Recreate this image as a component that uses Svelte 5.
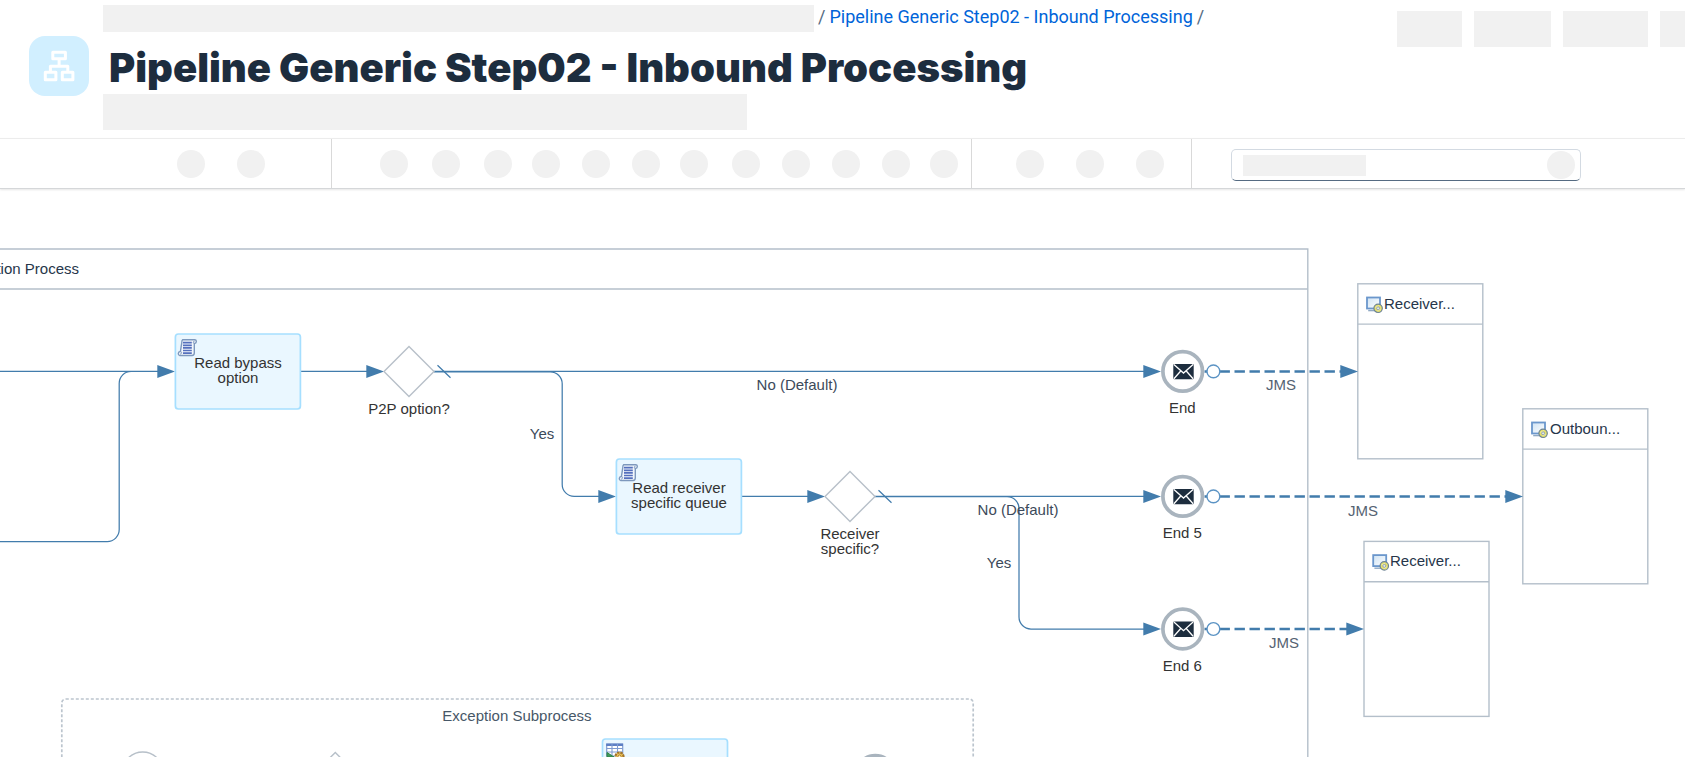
<script>
  const historyTools = ['Undo', 'Redo'];
  const paletteTools = [
    'Pointer', 'Hand', 'Participants', 'Process', 'Events', 'Mapping',
    'Transformation', 'Call', 'Routing', 'Security', 'Persistence', 'Validator'
  ];
  const viewTools = ['Zoom in', 'Zoom out', 'Fit'];

  const scripts = [
    { x: 175.4, y: 334, lines: ['Read bypass', 'option'] },
    { x: 616.4, y: 459, lines: ['Read receiver', 'specific queue'] }
  ];
  const gateways = [
    { x: 409, y: 371.4, lines: ['P2P option?'] },
    { x: 850, y: 496.4, lines: ['Receiver', 'specific?'] }
  ];
  const ends = [
    { y: 371.4, name: 'End', target: 1358 },
    { y: 496.4, name: 'End 5', target: 1523 },
    { y: 629, name: 'End 6', target: 1364 }
  ];
  const receivers = [
    { x: 1357.8, y: 283.8, name: 'Receiver...', tx: 1384 },
    { x: 1522.8, y: 408.8, name: 'Outboun...', tx: 1550 },
    { x: 1364, y: 541.4, name: 'Receiver...', tx: 1390 }
  ];
  const arrows = [
    [175, 371.4], [384, 371.4], [1161, 371.4],
    [616, 496.4], [825, 496.4], [1161, 496.4], [1161, 629]
  ];
  const labels = [
    { x: 797, y: 390, text: 'No (Default)' },
    { x: 1018, y: 515, text: 'No (Default)' },
    { x: 542, y: 439, text: 'Yes' },
    { x: 999, y: 568, text: 'Yes' }
  ];
  const protocols = [
    { x: 1281, y: 390 },
    { x: 1363, y: 516 },
    { x: 1284, y: 648 }
  ];
</script>

<div class="app">
  <header>
    <div class="tile">
      <svg width="32" height="32" viewBox="0 0 32 32" fill="none" stroke="#fff" stroke-width="3" stroke-linejoin="round" aria-hidden="true">
        <rect x="9.8" y="2.3" width="12.600" height="6.4" />
        <rect x="2.3" y="22.3" width="10.600" height="7.400" />
        <rect x="19.3" y="22.3" width="10.600" height="7.400" />
        <path d="M16.1 9v7M7.4 22v-5.800h17.400v5.800" />
      </svg>
    </div>
    <div class="heading">
      <nav class="crumbs" aria-label="Breadcrumb">
        <span class="block path"></span>
        <span>/</span>
        <a href="#step02">Pipeline Generic Step02 - Inbound Processing</a>
        <span>/</span>
      </nav>
      <h1>Pipeline Generic Step02 - Inbound Processing</h1>
      <div class="block status"></div>
    </div>
    <div class="actions">
      <button class="block a1" aria-label="Edit"></button>
      <button class="block a2" aria-label="Configure"></button>
      <button class="block a3" aria-label="Deploy"></button>
      <button class="block a4" aria-label="More"></button>
    </div>
  </header>

  <div class="toolbar" role="toolbar" aria-label="Editor tools">
    <div class="group history">
      {#each historyTools as t}<button class="dot" aria-label={t}></button>{/each}
    </div>
    <div class="group palette">
      {#each paletteTools as t}<button class="dot" aria-label={t}></button>{/each}
    </div>
    <div class="group view">
      {#each viewTools as t}<button class="dot" aria-label={t}></button>{/each}
    </div>
    <div class="search">
      <span class="block hint"></span>
      <input type="text" aria-label="Search" />
      <button class="dot" aria-label="Start search"></button>
    </div>
  </div>

  <main>
    <svg class="canvas" role="img" aria-label="Integration flow">
      <defs>
        <linearGradient id="screen" x1="0" y1="0" x2="1" y2="1">
          <stop offset="0" stop-color="#cfe3f4" />
          <stop offset="1" stop-color="#ffffff" />
        </linearGradient>
        <g id="scroll">
          <path d="M5.3 1h12.2c2 .2 2 3.8-.6 3.8v9.6c0 1.600-.8 2.400-2.200 2.400H2.300c-2-.2-2-4 .7-4L4.300 4.500c0-1.500.2-3 1-3.500z" fill="#f3f7fc" stroke="#7d98bd" stroke-width="1.400" />
          <path d="M16.900 4.800c-1.500-.3-1.200-2.500.2-2.300M3 12.800c1.800.2 1.500 2.600-.3 2.500" fill="none" stroke="#7d98bd" stroke-width="1" />
          <path d="M5.600 4h8.800M5.600 6.600h8.800M5.600 9.200h8.800M5.600 11.800h8.800M5.600 14.400h8.800" stroke="#5570bd" stroke-width="1.700" />
        </g>
        <g id="system">
          <path d="M2 14h8" stroke="#8fa9c4" stroke-width="1.400" />
          <rect x=".8" y=".9" width="13" height="11" fill="url(#screen)" stroke="#6b97cc" stroke-width="1.800" />
          <circle cx="11.900" cy="11.700" r="4.200" fill="#e6e06c" stroke="#6d8394" stroke-width="1.200" />
          <path d="M8.800 10.800l2.600.7 1.500-3M15 12.500l-2.600-.5-1.500 3" fill="#f5f6e6" opacity=".7" />
          <circle cx="11.900" cy="11.700" r="1.500" fill="#dfe8ee" stroke="#8797a0" stroke-width=".8" />
        </g>
      </defs>

      <g transform="translate(0 -189)">
        <g class="frame">
          <path d="M0 249H1307.800V760" />
          <path d="M0 289H1307.800" />
        </g>
        <text class="title" x="79" y="274" text-anchor="end">Integration Process</text>

        <rect class="dashed" x="61.800" y="699" width="911.400" height="200" rx="4" />
        <text class="sub" x="517" y="721" text-anchor="middle">Exception Subprocess</text>
        <circle class="shape" cx="142.700" cy="772.500" r="20.500" />
        <path class="shape" d="M310.300 777.500l25-25 25 25-25 25z" />
        <rect class="task" x="602.500" y="739" width="125" height="75" rx="3" />
        <g transform="translate(606 743)">
          <path d="M.7 1h16v12h-16z" fill="#fff" stroke="#7f9bd0" stroke-width="1.200" />
          <path d="M.2 1.800h16.800" stroke="#5d7fc4" stroke-width="2.400" />
          <path d="M.7 5.500h16M.7 9h16M6 1v11M11.500 1v11" stroke="#7f9bd0" stroke-width="1.100" fill="none" />
          <path d="M1 9.500l7 4.500H1z" fill="#3f9a5a" stroke="#2f8248" />
          <circle cx="13.500" cy="13.500" r="4" fill="#f0c95c" stroke="#a4752a" stroke-width="2.200" stroke-dasharray="2.400 .8" />
          <circle cx="13.500" cy="13.500" r="1.500" fill="#fff3c4" stroke="#a4752a" />
        </g>
        <circle class="ring" cx="875.300" cy="775.500" r="19.800" />

        <g class="flow">
          <path d="M0 371.400H160M0 541.600H107.200A12 12 0 0 0 119.200 529.600V383.400A12 12 0 0 1 131.200 371.400" />
          <path d="M300 371.400H370M434 371.400H1146" />
          <path d="M434 371.800H550A12 12 0 0 1 562.200 383.800V484.400A12 12 0 0 0 574.200 496.400H602" />
          <path d="M741 496.400H811M875 496.400H1146" />
          <path d="M875 496.600H1007A12 12 0 0 1 1019 508.600V617A12 12 0 0 0 1031 629H1146" />
          <path d="M437.500 365.200L450.500 377.700M878.500 490.200L891.500 502.700" />
        </g>

        {#each arrows as [x, y]}
          <path class="head" d="M{x} {y}l-17.700 -6.500v13z" />
        {/each}

        {#each scripts as s}
          <rect class="task" x={s.x} y={s.y} width="125" height="75" rx="3" />
          <use href="#scroll" x={s.x + 2} y={s.y + 4.700} />
          {#each s.lines as line, i}
            <text class="name" x={s.x + 62.600} y={s.y + 34 + i * 15} text-anchor="middle">{line}</text>
          {/each}
        {/each}

        {#each gateways as g}
          <path class="shape" d="M{g.x - 25} {g.y}l25 -25 25 25 -25 25z" />
          {#each g.lines as line, i}
            <text class="name" x={g.x} y={g.y + 43 + i * 15} text-anchor="middle">{line}</text>
          {/each}
        {/each}

        {#each receivers as r}
          <g class="frame">
            <rect x={r.x} y={r.y} width="125" height="175" />
            <path d="M{r.x} {r.y + 40.300}h125" />
          </g>
          <use href="#system" x={r.x + 8.400} y={r.y + 12.800} />
          <text class="title" x={r.tx} y={r.y + 25}>{r.name}</text>
        {/each}

        {#each ends as e}
          <path class="message" d="M1204.500 {e.y}H{e.target - 14}" />
          <path class="head" d="M{e.target} {e.y}l-17.700 -6.500v13z" />
          <circle class="start" cx="1213.400" cy={e.y} r="6.400" />
          <circle class="ring" cx="1182.700" cy={e.y} r="19.800" />
          <g transform="translate(1173.300 {e.y - 7.500})">
            <rect width="20.400" height="15.400" rx="1" fill="#1d2d3e" />
            <path d="M.6 .6l9.600 8.600L19.800 .6M.6 14.800l6.600-7.500M19.800 14.800l-6.600-7.500" fill="none" stroke="#fff" stroke-width="1.300" />
          </g>
          <text class="name" x="1182.300" y={e.y + 42} text-anchor="middle">{e.name}</text>
        {/each}

        {#each labels as l}
          <text class="label" x={l.x} y={l.y} text-anchor="middle">{l.text}</text>
        {/each}
        {#each protocols as p}
          <text class="label soft" x={p.x} y={p.y} text-anchor="middle">JMS</text>
        {/each}
      </g>
    </svg>
  </main>
</div>

<style>
  :global(body) {
    margin: 0;
    background: #fff;
    overflow: hidden;
  }
  .app {
    min-height: 100vh;
    display: flex;
    flex-direction: column;
    font-family: Roboto, "Liberation Sans", sans-serif;
    color: #1d2d3e;
  }
  button {
    border: 0;
    padding: 0;
    flex: none;
  }
  .block {
    display: block;
    background: #f1f1f1;
  }
  header {
    display: flex;
    padding-left: 29px;
    padding-bottom: 8px;
  }
  .tile {
    flex: none;
    display: grid;
    place-items: center;
    width: 60px;
    height: 60px;
    margin: 36px 14px 0 0;
    border-radius: 16px;
    background: #d1efff;
  }
  .heading {
    flex: none;
  }
  .crumbs {
    display: flex;
    gap: 4px;
    margin-top: 5px;
    font-size: 18px;
    line-height: 24px;
    height: 27px;
    color: #556b82;
  }
  .crumbs a {
    color: #0064d9;
    text-decoration: none;
  }
  .path {
    width: 711px;
  }
  h1 {
    margin: 0;
    padding: 10px 0 0 6px;
    font-family: Inter, "Open Sans", sans-serif;
    font-size: 40px;
    line-height: 52px;
    font-weight: 900;
    white-space: nowrap;
  }
  .status {
    width: 644px;
    height: 36px;
  }
  .actions {
    display: flex;
    gap: 12px;
    margin: 11px 0 0 auto;
  }
  .actions button {
    height: 36px;
  }
  .a1 { width: 65px; }
  .a2 { width: 77px; }
  .a3 { width: 85px; }
  .a4 { width: 25px; }
  .toolbar {
    display: flex;
    height: 49px;
    border-top: 1px solid #ececec;
    border-bottom: 1px solid #d5d7d9;
    box-shadow: 0 1px 2px #0000001a;
  }
  .group {
    flex: none;
    display: flex;
    align-items: center;
    gap: 32px;
    border-right: 1px solid #d9d9d9;
  }
  .history {
    padding: 0 66px 0 177px;
  }
  .palette {
    display: grid;
    grid-template-columns: 52px 52px 48px 50px 50px 48px 52px 50px 50px 50px 48px 28px;
    gap: 0;
    padding: 0 13px 0 48px;
  }
  .view {
    padding: 0 27px 0 44px;
  }
  .dot {
    width: 28px;
    height: 28px;
    border-radius: 50%;
    background: #f1f1f1;
  }
  .search {
    flex: 0 1 350px;
    min-width: 0;
    box-sizing: border-box;
    display: flex;
    align-items: center;
    height: 32px;
    margin: 10px 0 0 39px;
    padding: 0 5px 0 11px;
    border: 1px solid #d3dae2;
    border-bottom-color: #556b82;
    border-radius: 5px;
  }
  .hint {
    flex: none;
    width: 123px;
    height: 21px;
  }
  .search input {
    flex: 1;
    min-width: 0;
    border: 0;
    outline: 0;
    background: none;
    font-size: 15px;
  }
  main {
    flex: 1;
    display: flex;
  }
  .canvas {
    flex: 1;
    min-width: 0;
    height: auto;
    min-height: 560px;
    overflow: hidden;
    font: 15px "Liberation Sans", Arial, sans-serif;
  }
  .frame {
    fill: none;
    stroke: #b4bfca;
    stroke-width: 1.4;
  }
  .dashed {
    fill: none;
    stroke: #bcc5ce;
    stroke-width: 1.7;
    stroke-dasharray: 3 2;
  }
  .shape {
    fill: #fff;
    stroke: #b7c0c9;
    stroke-width: 1.4;
  }
  .task {
    fill: #eaf7ff;
    stroke: #a6dfff;
    stroke-width: 1.7;
  }
  .flow {
    fill: none;
    stroke: #427cac;
    stroke-width: 1.25;
  }
  .head {
    fill: #427cac;
  }
  .message {
    fill: none;
    stroke: #427cac;
    stroke-width: 2.5;
    stroke-dasharray: 10.4 4.6;
  }
  .start {
    fill: #fff;
    stroke: #5b93c4;
    stroke-width: 1.4;
  }
  .ring {
    fill: #fff;
    stroke: #a9b4be;
    stroke-width: 3.7;
  }
  .title {
    fill: #26364a;
  }
  .sub {
    fill: #475768;
  }
  .name {
    fill: #333;
  }
  .label {
    fill: #3c4a5a;
  }
  .soft {
    fill: #556372;
  }
</style>
